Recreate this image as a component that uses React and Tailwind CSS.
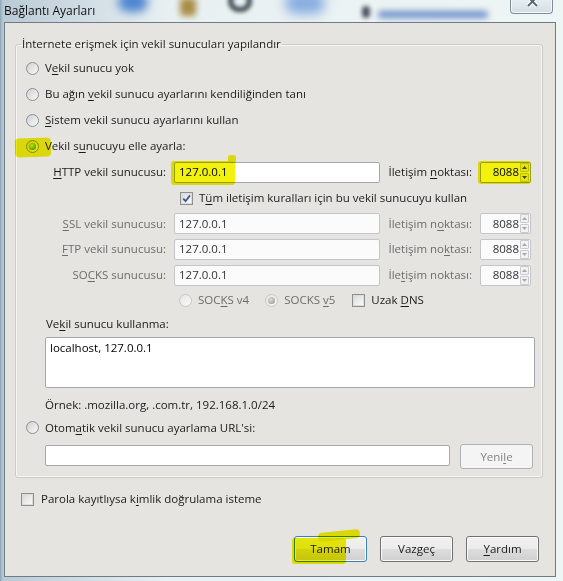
import React from 'react';

function U({ children }) {
  return <span className="underline decoration-1 underline-offset-[2px]">{children}</span>;
}

function Radio({ checked, disabled }) {
  return (
    <span
      className={`flex h-[13px] w-[13px] shrink-0 items-center justify-center rounded-full border ${
        disabled
          ? 'border-[#c5c7c9] bg-[linear-gradient(135deg,#e6e6e6,#f8f8f8)]'
          : 'border-[#8c8f92] bg-[linear-gradient(135deg,#cfd1d3,#f9f9f9)]'
      }`}
    >
      {checked && (
        <span
          className={`h-[7px] w-[7px] rounded-full ${
            disabled
              ? 'bg-[radial-gradient(circle_at_40%_35%,#e0e0e0,#8d8d8d)]'
              : 'bg-[radial-gradient(circle_at_40%_35%,#c4f58b,#2c8a1c)]'
          }`}
        />
      )}
    </span>
  );
}

function Check({ checked }) {
  return (
    <span className="flex h-[13px] w-[13px] shrink-0 items-center justify-center border border-[#8e8f8f] bg-white">
      <span className="flex h-[11px] w-[11px] items-center justify-center border border-[#dcdcdc] bg-[linear-gradient(135deg,#d9dadb,#fbfbfb)]">
        {checked && (
          <svg width="9" height="9" viewBox="0 0 9 9">
            <path d="M1.2 4.6 L3.6 7.2 L8 1.4" stroke="#3d569a" strokeWidth="1.8" fill="none" />
          </svg>
        )}
      </span>
    </span>
  );
}

function Field({ value, disabled, className }) {
  return (
    <div
      className={`flex h-[21px] items-center rounded-[2px] border px-[4px] ${
        disabled ? 'border-[#c3c5c9] bg-[#fbfbfb] text-[#333]' : 'border-[#a5a8af] bg-white text-black'
      } ${className}`}
    >
      {value}
    </div>
  );
}

function Port({ disabled }) {
  return (
    <div
      className={`flex h-[21px] w-[51px] items-center rounded-[2px] border ${
        disabled ? 'border-[#c3c5c9] bg-[#fbfbfb] text-[#333]' : 'border-[#a5a8af] bg-white text-black'
      }`}
    >
      <span className="flex-1 pr-[1px] text-right">8088</span>
      <div className="mr-[1px] flex h-[19px] w-[9px] flex-col gap-[1px]">
        <div className="flex flex-1 items-center justify-center rounded-[1px] border border-[#c8cacd] bg-[#f1f1f1]">
          <svg width="5" height="3" viewBox="0 0 5 3"><path d="M0 3 L2.5 0 L5 3Z" fill={disabled ? '#a8a8a8' : '#4a4a4a'} /></svg>
        </div>
        <div className="flex flex-1 items-center justify-center rounded-[1px] border border-[#c8cacd] bg-[#f1f1f1]">
          <svg width="5" height="3" viewBox="0 0 5 3"><path d="M0 0 L2.5 3 L5 0Z" fill={disabled ? '#a8a8a8' : '#4a4a4a'} /></svg>
        </div>
      </div>
    </div>
  );
}

function ProxyRow({ label, disabled, portLabel, h = 'h-[26px]', yellow }) {
  return (
    <div className={`flex items-center ${h}`}>
      <span className={`w-[140px] text-right ${disabled ? 'text-[#6d6d6d]' : ''}`}>{label}</span>
      <Field value="127.0.0.1" disabled={disabled} className="ml-[8px] w-[206px]" />
      <span className={`w-[92px] text-right ${disabled ? 'text-[#6d6d6d]' : ''}`}>{portLabel}</span>
      <div className="ml-[8px]">
        <Port disabled={disabled} />
      </div>
    </div>
  );
}

function Button({ children, primary }) {
  return (
    <div
      className={`flex h-[26px] items-center justify-center rounded-[3px] border bg-[linear-gradient(#f2f2f2_0%,#ebebeb_48%,#dddddd_52%,#cfcfcf_100%)] shadow-[inset_0_0_0_1px_#fbfbfb] ${
        primary ? 'border-[#3c7fb1] shadow-[inset_0_0_0_1px_#7fd3f5]' : 'border-[#707070]'
      } w-[73px]`}
    >
      {children}
    </div>
  );
}

function Highlight({ className }) {
  return <div className={`pointer-events-none absolute bg-[#f2f20e] mix-blend-multiply ${className}`} />;
}

export default function App() {
  return (
    <div className="relative h-[581px] w-[563px] overflow-hidden bg-[linear-gradient(90deg,#8ea6b8_0px,#b9cad6_3px,#e9f0f2_30%,#eef5f5_100%)] font-['Open_Sans',sans-serif] text-[11.5px] leading-[14px] text-[#1b1b1b]">
      {/* aero glass blur behind the title */}
      <div className="pointer-events-none absolute left-[118px] top-[-8px] h-[20px] w-[30px] rounded-full bg-[#4d86cf] blur-[5px]" />
      <div className="pointer-events-none absolute left-[180px] top-[-2px] h-[18px] w-[16px] rounded-[4px] bg-[#a98c45] blur-[3px]" />
      <div className="pointer-events-none absolute left-[228px] top-[-10px] h-[22px] w-[24px] rounded-full border-[5px] border-[#3a4650] blur-[2px]" />
      <div className="pointer-events-none absolute left-[285px] top-[-8px] h-[22px] w-[40px] rounded-full bg-[#86ace0] blur-[6px]" />
      <div className="pointer-events-none absolute left-[362px] top-[6px] h-[12px] w-[8px] rounded-full bg-[#4a5660] blur-[2px]" />
      <div className="pointer-events-none absolute left-[378px] top-[11px] h-[7px] w-[110px] rounded-full bg-[#6b8cc8] blur-[3px]" />

      <div className="relative flex h-[22px] items-start justify-between pl-[4px] pr-[10px]">
        <span className="mt-[3px] font-['Open_Sans',sans-serif] text-[12px] leading-[15px] text-[#111]">Bağlantı Ayarları</span>
        <div className="relative -mt-[1px] h-[15px] w-[43px] overflow-hidden rounded-b-[4px] border border-t-0 border-[#7f8f9a] bg-[linear-gradient(#e8eef2,#d4dee4)] shadow-[inset_0_0_0_1px_#f5f8fa]">
          <svg className="absolute left-[15px] top-[-4px]" width="13" height="13" viewBox="0 0 13 13">
            <path d="M2 2 L11 11 M11 2 L2 11" stroke="#ffffff" strokeWidth="4" />
            <path d="M2 2 L11 11 M11 2 L2 11" stroke="#5d6a74" strokeWidth="2" />
          </svg>
        </div>
      </div>

      <div className="relative ml-[4px] flex h-[555px] w-[552px] flex-col border border-[#6d7b86] bg-[#e6e4e1] pl-[10px] pr-[13px] pt-[14px]">
        <fieldset className="w-[528px] rounded-[3px] border border-[#cdcbc8] pb-[6px] shadow-[inset_0_0_0_1px_#f7f6f5]">
          <legend className="ml-[5px] px-[1px] leading-[14px]">İnternete erişmek için vekil sunucuları yapılandır</legend>
          <div className="flex flex-col pl-[10px] pt-[4px]">
            <label className="flex h-[26px] items-center gap-[6px]">
              <Radio />
              <span>V<U>e</U>kil sunucu yok</span>
            </label>
            <label className="flex h-[26px] items-center gap-[6px]">
              <Radio />
              <span>Bu ağın <U>v</U>ekil sunucu ayarlarını kendiliğinden tanı</span>
            </label>
            <label className="flex h-[26px] items-center gap-[6px]">
              <Radio />
              <span><U>S</U>istem vekil sunucu ayarlarını kullan</span>
            </label>
            <label className="flex h-[26px] items-center gap-[6px]">
              <Radio checked />
              <span>Vekil s<U>u</U>nucuyu elle ayarla:</span>
            </label>

            <ProxyRow label={<><U>H</U>TTP vekil sunucusu:</>} portLabel={<>İletişim <U>n</U>oktası:</>} />
            <div className="flex h-[26px] items-center gap-[6px] pl-[154px]">
              <Check checked />
              <span>T<U>ü</U>m iletişim kuralları için bu vekil sunucuyu kullan</span>
            </div>
            <ProxyRow disabled h="h-[25px]" label={<><U>S</U>SL vekil sunucusu:</>} portLabel={<>İletişim n<U>o</U>ktası:</>} />
            <ProxyRow disabled label={<><U>F</U>TP vekil sunucusu:</>} portLabel={<>İletişim no<U>k</U>tası:</>} />
            <ProxyRow disabled label={<>SO<U>C</U>KS sunucusu:</>} portLabel={<>İle<U>t</U>işim noktası:</>} />

            <div className="flex h-[24px] items-center pl-[153px]">
              <Radio disabled />
              <span className="ml-[6px] text-[#6d6d6d]">SOC<U>K</U>S v4</span>
              <span className="ml-[16px]"><Radio checked disabled /></span>
              <span className="ml-[6px] text-[#6d6d6d]">SOCKS <U>v</U>5</span>
              <span className="ml-[17px]"><Check /></span>
              <span className="ml-[6px]">Uzak <U>D</U>NS</span>
            </div>

            <div className="flex h-[24px] items-center pl-[20px]">
              Ve<U>k</U>il sunucu kullanma:
            </div>
            <div className="ml-[19px] mt-[1px] h-[51px] w-[490px] rounded-[2px] border border-[#a5a8af] bg-white pl-[4px] pt-[3px] text-black">
              localhost, 127.0.0.1
            </div>
            <div className="mt-[7px] flex h-[20px] items-center pl-[19px]">Örnek: .mozilla.org, .com.tr, 192.168.1.0/24</div>

            <label className="flex h-[25px] items-center gap-[6px]">
              <Radio />
              <span>Otom<U>a</U>tik vekil sunucu ayarlama URL&apos;si:</span>
            </label>
            <div className="flex h-[31px] items-center pl-[19px]">
              <Field value="" className="w-[405px]" />
              <div className="ml-[10px] mt-[2px] flex h-[25px] w-[73px] items-center justify-center rounded-[3px] border border-[#aeb2b5] bg-[#f4f4f4] text-[#838383]">
                Yeni<U>l</U>e
              </div>
            </div>
          </div>
        </fieldset>

        <div className="mt-[11px] flex h-[20px] items-center gap-[7px] pl-[6px]">
          <Check />
          <span>Parola kayıtlıysa k<U>i</U>mlik doğrulama isteme</span>
        </div>

        <div className="mr-[3px] mt-[27px] flex justify-end gap-[13px]">
          <Button primary>Tamam</Button>
          <Button>Vazgeç</Button>
          <Button><span><U>Y</U>ardım</span></Button>
        </div>
      </div>

      {/* marker highlights drawn over the screenshot */}
      <Highlight className="left-[15px] top-[138px] h-[19px] w-[36px] rounded-[4px] -rotate-2" />
      <Highlight className="left-[171px] top-[161px] h-[24px] w-[64px] rounded-[3px]" />
      <Highlight className="left-[228px] top-[155px] h-[8px] w-[8px] rounded-[2px]" />
      <Highlight className="left-[478px] top-[161px] h-[23px] w-[53px] rounded-[3px]" />
      <Highlight className="left-[292px] top-[538px] h-[26px] w-[54px] rounded-[3px]" />
      <Highlight className="left-[318px] top-[531px] h-[9px] w-[42px] rounded-[4px] -rotate-6" />
    </div>
  );
}
